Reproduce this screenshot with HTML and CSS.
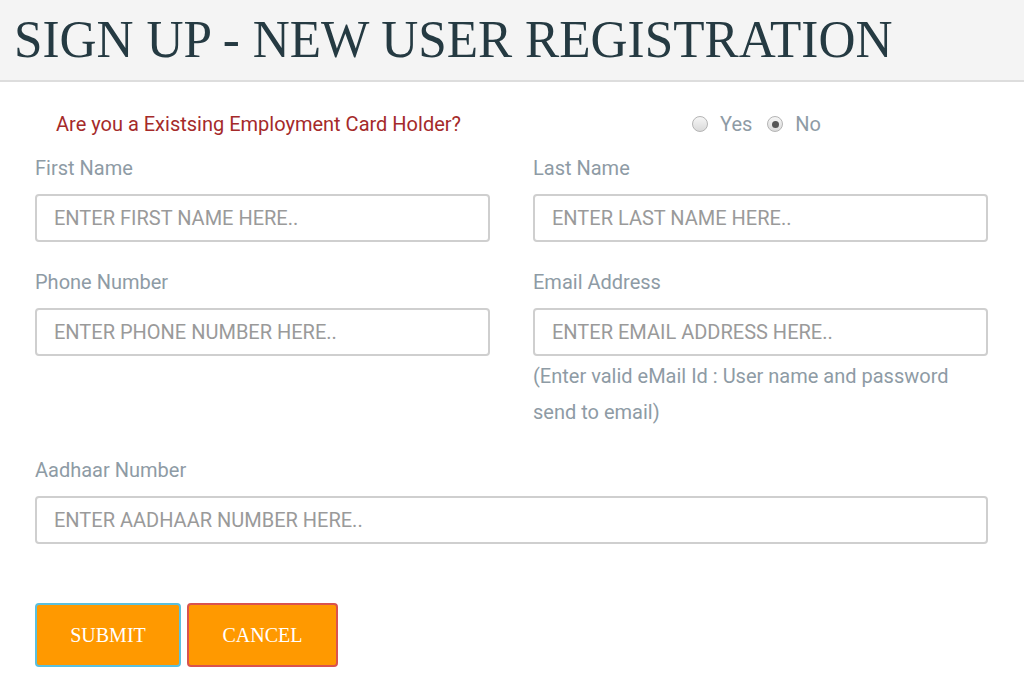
FILE: index.html
```html
<!DOCTYPE html>
<html>
<head>
<meta charset="utf-8">
<link rel="stylesheet" href="styles.css">
</head>
<body>
<header class="page-head">
  <h1 class="title">SIGN UP - NEW USER REGISTRATION</h1>
</header>
<main class="form">
  <div class="question-row">
    <p class="question">Are you a Existsing Employment Card Holder?</p>
    <div class="radios">
      <span class="radio"></span><span class="radio-label">Yes</span>
      <span class="radio checked"></span><span class="radio-label">No</span>
    </div>
  </div>
  <div class="grid">
    <div class="field">
      <label class="label">First Name</label>
      <div class="input">ENTER FIRST NAME HERE..</div>
    </div>
    <div class="field">
      <label class="label">Last Name</label>
      <div class="input">ENTER LAST NAME HERE..</div>
    </div>
    <div class="field">
      <label class="label">Phone Number</label>
      <div class="input">ENTER PHONE NUMBER HERE..</div>
    </div>
    <div class="field">
      <label class="label">Email Address</label>
      <div class="input">ENTER EMAIL ADDRESS HERE..</div>
      <p class="hint">(Enter valid eMail Id : User name and password send to email)</p>
    </div>
    <div class="field wide">
      <label class="label">Aadhaar Number</label>
      <div class="input">ENTER AADHAAR NUMBER HERE..</div>
    </div>
  </div>
  <div class="buttons">
    <button class="btn submit">SUBMIT</button>
    <button class="btn cancel">CANCEL</button>
  </div>
</main>
</body>
</html>
```
FILE: styles.css
```css
* { box-sizing: border-box; }
body {
  margin: 0;
  background: #fff;
  font-family: Roboto, "Liberation Sans", sans-serif;
}
.page-head {
  background: #f4f4f4;
  border-bottom: 2px solid #dddddd;
  height: 82px;
  padding-left: 14px;
  overflow: hidden;
}
.title {
  margin: 0;
  font-family: "Liberation Serif", serif;
  font-weight: normal;
  font-size: 53px;
  line-height: 78px;
  color: #253a42;
  transform-origin: left center;
  transform: scaleX(0.967);
  white-space: nowrap;
}
.form {
  padding: 0 36px 0 35px;
}
.question-row {
  display: flex;
  align-items: center;
  height: 84px;
}
.question {
  margin: 0 0 0 21px;
  width: 636px;
  color: #a52a2a;
  font-size: 20px;
}
.radios {
  display: flex;
  align-items: center;
  color: #8e9ba5;
  font-size: 20px;
}
.radio {
  width: 16px;
  height: 16px;
  border-radius: 50%;
  border: 1px solid #b4b4b4;
  background: linear-gradient(#f6f6f6, #dadada);
  display: inline-flex;
  align-items: center;
  justify-content: center;
  margin-right: 12px;
}
.radio.checked::after {
  content: "";
  width: 7px;
  height: 7px;
  border-radius: 50%;
  background: #555;
}
.radio-label { margin-right: 15px; }
.grid {
  display: grid;
  grid-template-columns: 1fr 1fr;
  column-gap: 43px;
}
.field { margin-bottom: 38px; }
.field.wide { grid-column: 1 / span 2; }
.label {
  display: block;
  color: #8e9ba5;
  font-size: 20px;
  margin-top: -12px;
  line-height: 28px;
  margin-bottom: 12px;
}
.input {
  height: 48px;
  border: 2px solid #cfcfcf;
  border-radius: 4px;
  padding-left: 17px;
  display: flex;
  align-items: center;
  color: #9a9a9a;
  font-size: 20px;
}
.hint {
  margin: 0;
  padding-top: 2px;
  color: #8e9ba5;
  font-size: 20px;
  line-height: 36px;
  padding-right: 30px;
}
.buttons {
  display: flex;
  gap: 6px;
  margin-top: 21px;
}
.btn {
  height: 64px;
  background: #ff9900;
  color: #fff;
  font-family: "Liberation Serif", serif;
  font-size: 20px;
  border-radius: 4px;
  border: 2px solid;
  padding: 0;
}
.submit { width: 146px; border-color: #5bc0de; }
.cancel { width: 151px; border-color: #d9534f; }
```
